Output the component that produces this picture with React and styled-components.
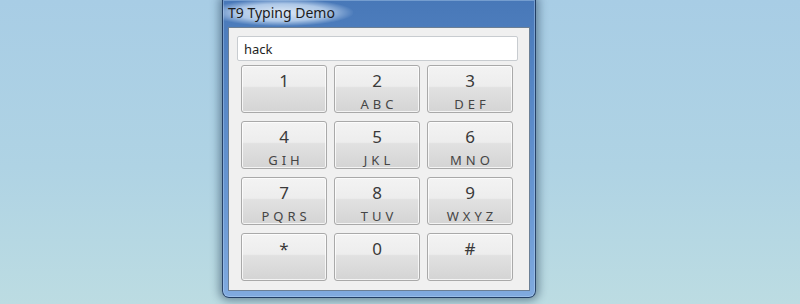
import React from "react";
import styled, { createGlobalStyle } from "styled-components";

const Global = createGlobalStyle`
  html, body { margin: 0; padding: 0; }
  body {
    width: 800px;
    height: 304px;
    overflow: hidden;
    background: linear-gradient(180deg, #a8cde5 0%, #afd3e4 55%, #bcdce2 100%);
    font-family: "Noto Sans", "Open Sans", "DejaVu Sans", sans-serif;
  }
`;

const Desktop = styled.div`
  display: flex;
  align-items: flex-start;
  height: 304px;
  padding-left: 222px;
  box-sizing: border-box;
`;

const Window = styled.div`
  width: 314px;
  height: 298px;
  box-sizing: border-box;
  display: flex;
  flex-direction: column;
  border: 1px solid rgba(28, 52, 86, 0.85);
  border-top: none;
  border-radius: 0 0 7px 7px;
  background: linear-gradient(180deg, #4878b8 0%, #5686c5 30%, #6a98d3 70%, #80aadf 100%);
  box-shadow: 0 0 9px 3px rgba(20, 45, 70, 0.45), inset 0 0 0 1px rgba(200, 225, 250, 0.35);
`;

const TitleBar = styled.div`
  height: 27px;
  flex: none;
  display: flex;
  align-items: center;
`;

const Title = styled.span`
  font-family: "Noto Sans", "Open Sans", sans-serif;
  font-size: 14px;
  color: #1c1c1c;
  padding: 4px 18px 4px 5px;
  margin-top: -2px;
  background: radial-gradient(ellipse at 45% 50%, rgba(236, 244, 252, 0.9) 0%, rgba(215, 232, 250, 0.7) 45%, rgba(200, 225, 250, 0) 72%);
`;

const Client = styled.div`
  flex: 1;
  margin: 0 5px 6px 5px;
  border: 1px solid #6b7f95;
  background: #f0f0f0;
  padding: 8px 11px 0 8px;
  display: flex;
  flex-direction: column;
`;

const Field = styled.div`
  height: 25px;
  box-sizing: border-box;
  border: 1px solid #c8ccd0;
  border-radius: 2px;
  background: #ffffff;
  padding: 0 6px;
  display: flex;
  align-items: center;
  font-size: 13px;
  color: #1e1e1e;
`;

const Keypad = styled.div`
  margin: 4px 0 0 4px;
  display: grid;
  grid-template-columns: repeat(3, 86px);
  grid-auto-rows: 48px;
  column-gap: 7px;
  row-gap: 8px;
`;

const Key = styled.div`
  box-sizing: border-box;
  border: 1px solid #a9a9a9;
  border-radius: 3px;
  background: linear-gradient(180deg, #f3f3f3 0%, #ededed 44%, #e1e1e1 47%, #d4d4d4 100%);
  box-shadow: inset 0 0 0 1px rgba(255, 255, 255, 0.75);
  display: flex;
  flex-direction: column;
  align-items: center;
  padding-top: 3px;
`;

const Digit = styled.span`
  font-size: 17px;
  line-height: 24px;
  color: #3a3a3a;
`;

const Letters = styled.span`
  font-size: 13px;
  line-height: 18px;
  margin-top: 2px;
  letter-spacing: 4px;
  padding-left: 4px;
  color: #454545;
  min-height: 18px;
`;

const keys = [
  ["1", ""], ["2", "ABC"], ["3", "DEF"],
  ["4", "GIH"], ["5", "JKL"], ["6", "MNO"],
  ["7", "PQRS"], ["8", "TUV"], ["9", "WXYZ"],
  ["*", ""], ["0", ""], ["#", ""],
];

export default function App() {
  return (
    <>
      <Global />
      <Desktop>
        <Window>
          <TitleBar>
            <Title>T9 Typing Demo</Title>
          </TitleBar>
          <Client>
            <Field>hack</Field>
            <Keypad>
              {keys.map(([d, l]) => (
                <Key key={d}>
                  <Digit>{d}</Digit>
                  <Letters>{l}</Letters>
                </Key>
              ))}
            </Keypad>
          </Client>
        </Window>
      </Desktop>
    </>
  );
}
